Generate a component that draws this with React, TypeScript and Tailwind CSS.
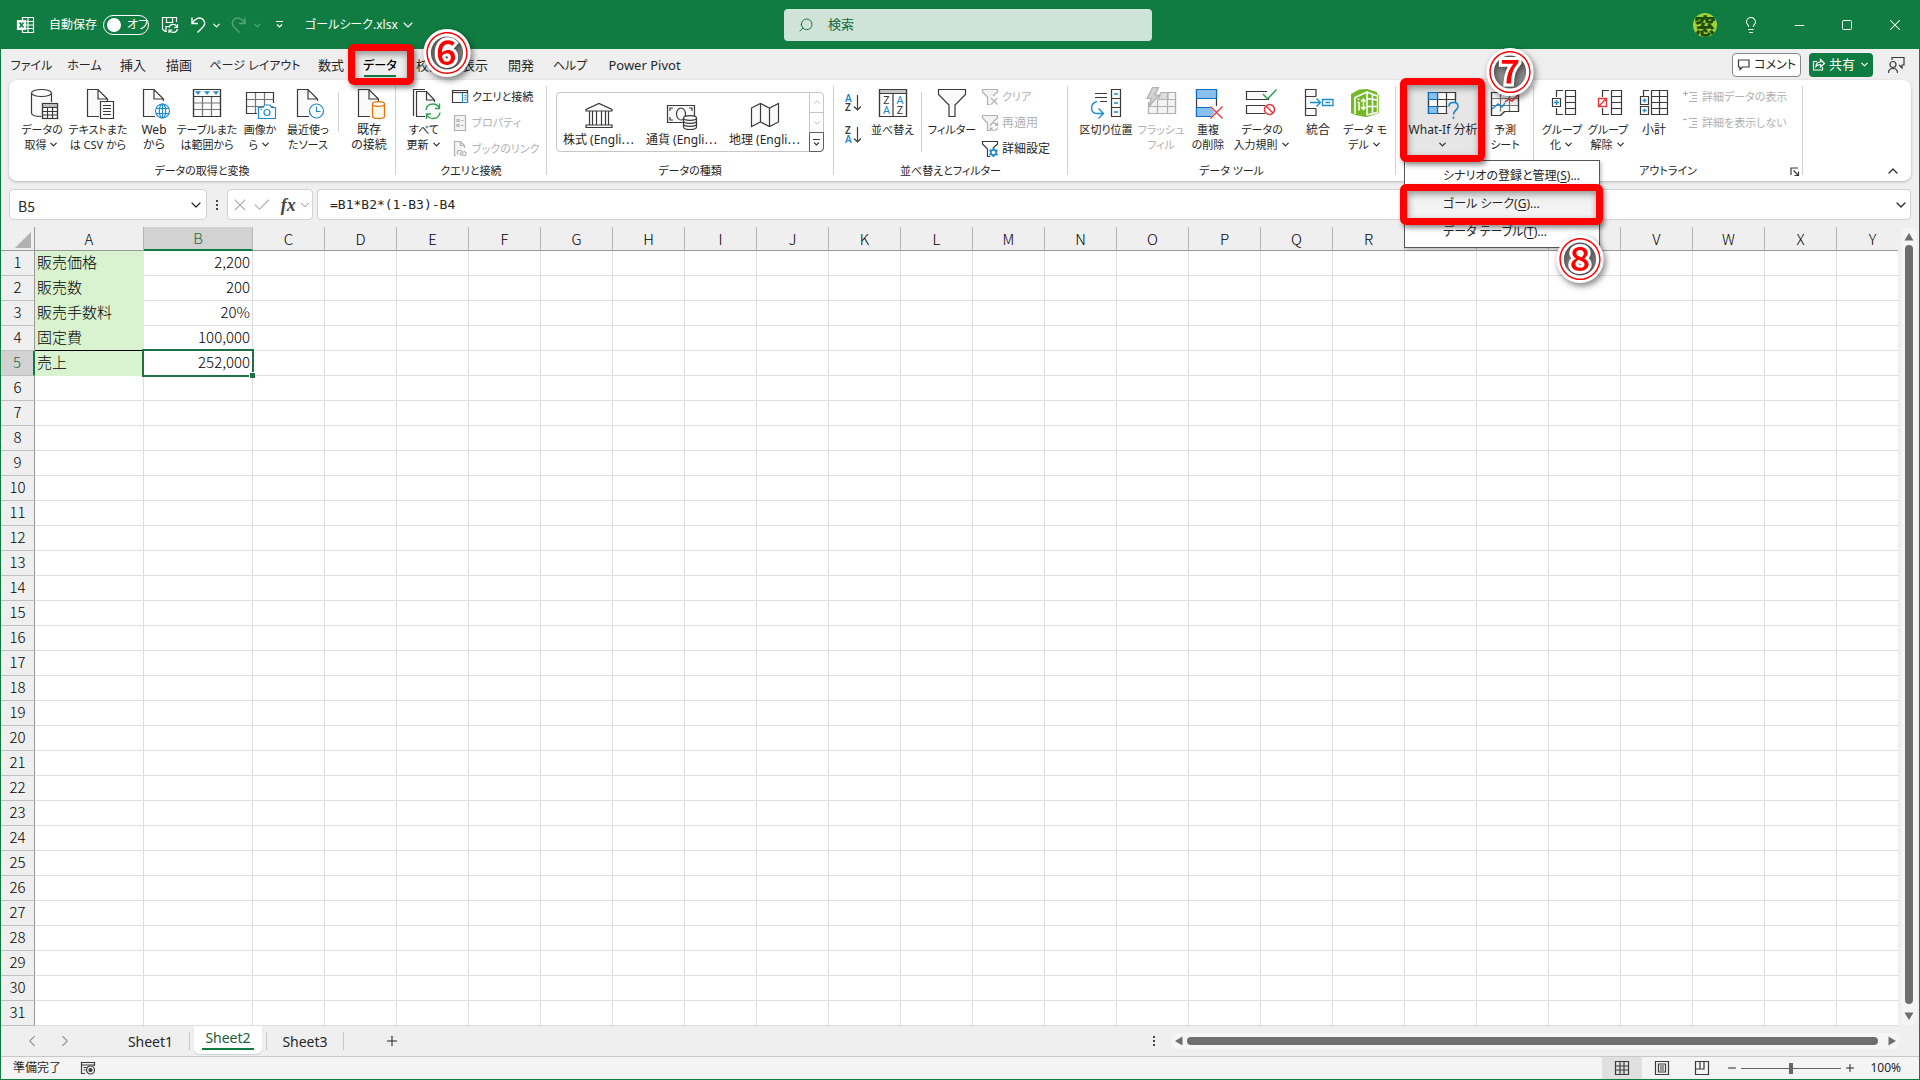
import type { ReactNode } from "react";
import { Check, ChevronDown, ChevronLeft, ChevronRight, ChevronUp, Lightbulb, Minus, Plus, Redo2, Search, Square, Undo2, X } from "lucide-react";

const INK = "#3b3a39";
const BLUE = "#1e8bcd";
const GREEN = "#2f9e4d";
const RED = "#e8383d";
const FADED = "#b1b1b1";

const tabs: { label: string; style: string }[] = [
  { label: "ファイル", style: "w-[55px] text-xs" },
  { label: "ホーム", style: "w-[51px] text-xs" },
  { label: "挿入", style: "w-[46px] text-[13px]" },
  { label: "描画", style: "w-[46px] text-[13px]" },
  { label: "ページ レイアウト", style: "w-[106px] text-xs" },
  { label: "数式", style: "w-[46px] text-[13px]" },
  { label: "データ", style: "w-[52px] text-xs" },
  { label: "校閲", style: "w-[46px] text-[13px]" },
  { label: "表示", style: "w-[46px] text-[13px]" },
  { label: "開発", style: "w-[46px] text-[13px]" },
  { label: "ヘルプ", style: "w-[52px] text-xs" },
  { label: "Power Pivot", style: "w-[97px] text-[13px]" },
];

const columns = "ABCDEFGHIJKLMNOPQRSTUVWXY".split("");

const sheet: { name: string; value: string }[] = [
  { name: "販売価格", value: "2,200" },
  { name: "販売数", value: "200" },
  { name: "販売手数料", value: "20%" },
  { name: "固定費", value: "100,000" },
  { name: "売上", value: "252,000" },
];

/* ---------- icons ---------- */

function Icon({ w = 32, h = 32, stroke = INK, children }: { w?: number; h?: number; stroke?: string; children: ReactNode }) {
  return (
    <svg width={w} height={h} viewBox={`0 0 ${w} ${h}`} fill="none" stroke={stroke} strokeWidth="1.2" className="shrink-0 overflow-visible" aria-hidden="true">
      {children}
    </svg>
  );
}

function Page() {
  return <path d="M25.5 13V11L16 1.5H5.5V28.5H17M16 1.5V11H25.5" fill="#fafafa" />;
}

const GetDataIcon = () => (
  <Icon>
    <path d="M5.500 5V25c0 2 4 3.500 10 3.500V15h10V5z" fill="#fafafa" stroke="none" />
    <path d="M5.500 5V25c0 2 4 3.500 10 3.500M25.500 5v9" />
    <ellipse cx="15.500" cy="5" rx="10" ry="3.500" fill="#fff" />
    <rect x="16.500" y="15.500" width="15" height="15" fill="#fff" />
    <path d="M17 17.500h14" stroke="#bbb" strokeWidth="3" />
    <path d="M16.500 19.500h15M16.500 23.500h15M16.500 27h15M21.500 19v11.500M26.500 19v11.500M16.500 15.500h15v15h-15z" />
  </Icon>
);
const TextCsvIcon = () => (
  <Icon>
    <Page />
    <path d="M18.500 13.500h13v17h-13z" fill="#fff" />
    <path d="M21 17.500h8M21 20.500h8M21 23.500h8M21 26.500h8" />
  </Icon>
);
const WebIcon = () => (
  <Icon>
    <Page />
    <g stroke={BLUE}>
      <circle cx="24.500" cy="23" r="7" fill="#fff" />
      <ellipse cx="24.500" cy="23" rx="3.200" ry="7" />
      <path d="M24.500 16v14M18 20.500h13M18 25.500h13" />
    </g>
  </Icon>
);
const TableIcon = () => (
  <Icon>
    <path d="M2.500 1.500h27v27h-27z" fill="#fafafa" />
    <path d="M2.500 8.500h27M2.500 15h27M2.500 21.500h27M11.500 8.500v20M20.500 8.500v20" stroke="#767676" />
    <path d="M2.500 1.500h27v27h-27zM2.500 8.500h27" />
    <path d="M4.500 3.500h5L7 6.500zM13.500 3.500h5L16 6.500zM22.500 3.500h5L25 6.500z" fill={BLUE} stroke={BLUE} strokeWidth=".5" />
  </Icon>
);
const PictureIcon = () => (
  <Icon>
    <path d="M2.500 4.500h27v21h-27z" fill="#fafafa" stroke="none" />
    <path d="M2.500 11.500h27M2.500 18.500h27M11.500 4.500v21M20.500 4.500v21" stroke="#767676" />
    <path d="M29.500 15V4.500h-27v21H13" />
    <path d="M14.500 19.500h4.500l1.500-2.500h5.500l1.500 2.500h4v11h-17z" fill="#fff" stroke={BLUE} />
    <circle cx="23" cy="24.500" r="3" stroke={BLUE} />
    <path d="M16.500 21.500h1.500" stroke={BLUE} />
  </Icon>
);
const RecentIcon = () => (
  <Icon>
    <Page />
    <circle cx="24.500" cy="23" r="7" fill="#fff" stroke={BLUE} />
    <path d="M24.500 18.500V23.500H28.500" stroke={BLUE} />
  </Icon>
);
const ExistingIcon = () => (
  <Icon>
    <Page />
    <g stroke="#e0730d">
      <path d="M19.500 16v12.500c0 1.200 2.500 2 6 2s6-.8 6-2V16" fill="#fff5e8" />
      <ellipse cx="25.500" cy="16" rx="6" ry="2.300" fill="#fff" />
    </g>
  </Icon>
);
const RefreshIcon = () => (
  <Icon>
    <path d="M5.500 28V1.500H17" />
    <path d="M26.500 14v-2L18.500 3.500H8.500v25H17M18.500 3.500v8.500h8" fill="#fafafa" />
    <circle cx="25" cy="23" r="8" fill="#fff" stroke="none" />
    <path
      d="M18 22c.5-4 3.500-6 7-6 3 0 5 1.500 6.500 4M31.500 15.500v5H27M32 24.500c-.5 4-3.500 6-7 6-3 0-5-1.500-6.500-4M18.500 31v-5H23"
      stroke={GREEN}
      strokeWidth="1.400"
    />
  </Icon>
);
const PaneIcon = () => (
  <Icon w={16} h={16}>
    <path d="M.5 1.500h15v12H.5z" fill="#fff" />
    <path d="M.5 3.500h15" />
    <path d="M10.500 4v9.500h5V4M12.500 6.500h1.500M12.500 8.500h1.500M12.500 10.500h1.500" stroke={BLUE} />
  </Icon>
);
const PropertiesIcon = () => (
  <Icon w={16} h={16} stroke={FADED}>
    <path d="M2.500.5h11v15h-11z" fill="#f3f3f3" />
    <path d="M5 4.500h2v2H5zM5 9.500h2v2H5zM9 5.500h2.500M9 10.500h2.500" />
  </Icon>
);
const BookLinkIcon = () => (
  <Icon w={16} h={16} stroke={FADED}>
    <path d="M4 14.500H2.500V.5h6l4 4V7M8.500.5v4h4" fill="#f3f3f3" />
    <path d="M6.500 13.500c-2.500-1.500-1-4.500 1.500-4l2 .5c1.500.5 1.500 3-.5 3M12 10.500c3 .5 2.500 4.500-.5 4l-2-.5c-1.500-.5-1.500-2.500 0-3" />
  </Icon>
);
const BankIcon = () => (
  <Icon w={30} h={26}>
    <path d="M2 9V7.500L15 1.500l13 6V9zM2 25.500v-2.500h26v2.500z" fill="#fafafa" />
    <path d="M5.500 9v14M8.500 9v14M12.500 9v14M17.500 9v14M21.500 9v14M24.500 9v14" />
  </Icon>
);
const MoneyIcon = () => (
  <Icon w={32} h={26}>
    <path d="M1.500 3.500h27v17h-27z" fill="#fafafa" />
    <path d="M4 9V6h3M26 9V6h-3M4 15v3h3" />
    <ellipse cx="15" cy="12" rx="4.500" ry="6" />
    <path d="M17.500 16v9c0 1.500 3 2.500 6.500 2.500s6.500-1 6.500-2.500v-9z" fill="#fff" />
    <ellipse cx="24" cy="16" rx="6.500" ry="2.300" fill="#fff" />
    <path d="M17.500 19c0 1.500 3 2.300 6.500 2.300s6.500-.8 6.500-2.300M17.500 22c0 1.500 3 2.300 6.500 2.300s6.500-.8 6.500-2.300" />
  </Icon>
);
const MapIcon = () => (
  <Icon w={30} h={26}>
    <path d="M1.500 6L10.500 1.500L19.500 6L28.500 1.500V20L19.500 24.500L10.500 20L1.500 24.500zM10.500 1.500V20M19.500 6V24.500" fill="#fafafa" />
  </Icon>
);

function SortLetters({ top, bottom, topBlue }: { top: string; bottom: string; topBlue: boolean }) {
  return (
    <Icon w={20} h={22}>
      <g stroke="none" fontFamily="Noto Sans, sans-serif" fontSize="10" fontWeight="600">
        <text x="1" y="10" fill={topBlue ? BLUE : INK}>{top}</text>
        <text x="1" y="19" fill={topBlue ? INK : BLUE}>{bottom}</text>
      </g>
      <path d="M13.500 3v15M10 14.500l3.500 3.500l3.500-3.500" />
    </Icon>
  );
}
const SortIcon = () => (
  <Icon>
    <path d="M2.500 1.500h27v27h-27z" fill="#fff" />
    <path d="M3 3.500h26" stroke="#c8c6c4" strokeWidth="3" />
    <path d="M2.500 5.500h27M16 5.500v23M2.500 1.500h27v27h-27z" />
    <g stroke="none" fontFamily="Noto Sans, sans-serif" fontSize="11" textAnchor="middle">
      <text x="9.500" y="16" fill={INK}>Z</text>
      <text x="9.500" y="26" fill={BLUE}>A</text>
      <text x="23" y="16" fill={BLUE}>A</text>
      <text x="23" y="26" fill={INK}>Z</text>
    </g>
  </Icon>
);
const FilterIcon = () => (
  <Icon>
    <path d="M2.500 1.500h27v5L19 17v11.500h-6V17L2.500 6.500z" fill="#fafafa" />
  </Icon>
);
function SmallFilter({ kind }: { kind: "clear" | "again" | "gear" }) {
  const c = kind === "gear" ? INK : FADED;
  return (
    <Icon w={16} h={16} stroke={c}>
      <path d="M8 15.500H5.500V8L.5 3V.5h15V3L11 7" fill={kind === "gear" ? "#fff" : "#f3f3f3"} />
      {kind === "clear" && <path d="M9 9l6.500 6.500M15.500 9L9 15.500" />}
      {kind === "again" && <path d="M8.500 11c.5-4 5.500-4 6.500-.5M15.500 7.500v3H13M15.500 12.500c-.5 3.500-5 4-6.500 1M8.500 16v-3H11" />}
      {kind === "gear" && (
        <g stroke={BLUE}>
          <circle cx="11.500" cy="11.500" r="2.600" fill="#fff" strokeWidth="1.600" />
          <path d="M11.500 7v2M11.500 14v2M7.500 9.200l1.800 1M13.700 12.800l1.800 1M7.500 13.800l1.800-1M13.700 10.200l1.800-1" strokeWidth="2" />
        </g>
      )}
    </Icon>
  );
}
const SplitIcon = () => (
  <Icon>
    <path d="M21.500 1.500h9v27h-9zM21.500 10.500h9M21.500 19.500h9" fill="#fafafa" />
    <path d="M5 5.500h12M5 9.500h12M10 13.500h7" />
    <path d="M24 6h4M24 15h4M24 24h4M7 13.500C0 15 0 24.500 6 25.500h7M8.500 20.500l5 5l-5 5" stroke={BLUE} strokeWidth="1.400" />
  </Icon>
);
const FlashIcon = () => (
  <Icon stroke={FADED}>
    <path d="M3.500 14v11.500h27V4.500H16" fill="#f3f3f3" />
    <path d="M16 4.500h7v7h-10z" fill="#ddd" />
    <path d="M14 11.500h16.500M3.500 18.500h27M12.500 12v13.500M22.500 4.500v21M30.500 4.500v21" />
    <path d="M7.500-.5h6L10 7h4L3.500 19L6.500 10.500H2z" fill="#d2d2d2" />
  </Icon>
);
const DuplicatesIcon = () => (
  <Icon>
    <path d="M4.500 1.500h20v27h-20z" fill="#fafafa" />
    <path d="M4.500 1.500h20v9h-20zM4.500 19.500h20v9h-20z" fill="#8ac0ec" stroke="#0f6cbd" />
    <path d="M17.500 18h12v13h-12l5-6.500z" fill="#fff" stroke="none" />
    <path d="M18.500 18.500l12 12M30.500 18.500l-12 12" stroke={RED} strokeWidth="1.400" />
  </Icon>
);
const ValidationIcon = () => (
  <Icon>
    <path d="M21 3.500H.5v8h22V9M19 17.500H.5v8H19" fill="#fafafa" />
    <path d="M17 6l4.500 5L30.500 1.500" stroke={GREEN} strokeWidth="1.400" />
    <circle cx="23.500" cy="21.500" r="5" fill="#fff" stroke={RED} strokeWidth="1.500" />
    <path d="M20 18l7 7" stroke={RED} strokeWidth="1.500" />
  </Icon>
);
const ConsolidateIcon = () => (
  <Icon>
    <path d="M14 8.500V1.500H3.500v26H14v-7M3.500 8.500H14M3.500 20.500H14M3.500 8.500v12" fill="#fafafa" />
    <path d="M8 14.500h10M14.500 10.500l4 4l-4 4M20.500 11.500h10.500v6H20.500zM23.500 14.500h4.500" stroke={BLUE} strokeWidth="1.300" />
  </Icon>
);
const ModelIcon = () => (
  <Icon>
    <path d="M2 6L10 1.500 18 1l10 3v3L17 29 6 27 2 25z" fill="#76b82a" stroke="none" />
    <path d="M13 4L18 2.500L30 7v18L18 29l-5-1z" fill="#76b82a" stroke="none" />
    <g stroke="#fff" strokeWidth="1.500">
      <path d="M6 26V9.500L18 4v23M17.500 4l11 4v16.500l-11 2.500M18 10.500l10.500 1.500M18 18.500h10.500M23.500 6v19" />
      <path d="M9.500 10.500v1.500M8.500 14.500h1.500v8M14.500 11v10.500M12 13.500l2.500-2.500l2 2.500M12 19l2.500 2.500l2-2.500" />
    </g>
  </Icon>
);
const WhatIfIcon = () => (
  <Icon>
    <path d="M1.500 4.500h27v21h-27z" fill="#fafafa" />
    <path d="M1.500 11.500h27M1.500 18.500h27M10.500 4.500v21M19.500 4.500v21M20 25.500H1.500v-21h27V11" />
    <path d="M1.500 4.500h9v7h-9zM1.500 18.500h9v7h-9z" fill="#8ac0ec" stroke="#0f6cbd" />
    <path d="M20.500 14h12v18h-12z" fill="#e6e6e6" stroke="none" />
    <path d="M22 18.500c0-5.500 9-5.500 9 0 0 3.500-4.500 4-4.500 8M26.500 28.500v2.500" stroke={BLUE} strokeWidth="1.600" />
  </Icon>
);
const ForecastIcon = () => (
  <Icon>
    <path d="M2.500 4.500h27v19h-14l-4 4h-9z" fill="#fafafa" />
    <path d="M2.500 10.500h27M2.500 17.500h27M11.500 4.500v19M20.500 4.500v19" stroke="#767676" />
    <path d="M2.500 4.500h27v19h-14l-4 4h-9z" />
    <path d="M3 21l6-5l4 3l3-4" stroke={BLUE} strokeWidth="1.500" />
    <path d="M16 14l4-3l3 2l7-7" stroke={RED} strokeWidth="1.500" />
  </Icon>
);
const GroupIcon = () => (
  <Icon>
    <path d="M19.500 2.500h10v24h-10zM19.500 8.500h10M19.500 14.500h10M19.500 20.500h10M17 2.500h-6.500V9M17 26.500h-6.500V20" fill="#fafafa" />
    <path d="M6.500 10.500h8v8h-8z" fill="#fff" />
    <path d="M8 14.500h5M10.500 12v5" stroke={BLUE} strokeWidth="1.500" />
  </Icon>
);
const UngroupIcon = () => (
  <Icon>
    <path d="M19.500 2.500h10v24h-10zM19.500 8.500h10M19.500 14.500h10M19.500 20.500h10M17 2.500h-6.500V9M17 26.500h-6.500V20" fill="#fafafa" />
    <path d="M6.500 10.500h8v8h-8zM7 18l7-7" fill="#fff" stroke={RED} strokeWidth="1.400" />
  </Icon>
);
const SubtotalIcon = () => (
  <Icon>
    <path d="M13.500 2.500h16v24h-16zM13.500 8.500h16M13.500 14.500h16M13.500 20.500h16M21.500 2.500v24M11 2.500H5.500V8" fill="#fafafa" />
    <path d="M2.500 8.500h8v8h-8zM2.500 18.500h8v8h-8z" fill="#fff" />
    <path d="M4.500 12.500h4M6.500 10.500v4M4.500 22.500h4M6.500 20.500v4" stroke={BLUE} strokeWidth="1.300" />
  </Icon>
);
function DetailIcon({ plus }: { plus: boolean }) {
  return (
    <Icon w={16} h={16} stroke={FADED}>
      <path d={plus ? "M1 4.500h5M3.500 2v5" : "M1 4.500h4"} />
      <path d="M7 3.500h8M10 6.500h5M10 9.500h5M7 12.500h8" />
    </Icon>
  );
}
const ExcelIcon = () => (
  <Icon w={18} h={18} stroke="#fff">
    <path d="M5.500 4V1.500h11v15h-11V14M5 5.500h11.500M9 9h7.500M5 12.500h11.500M11 1.500v15" />
    <path d="M.5 4.500h8v9h-8z" fill="#fff" />
    <path d="M2.500 6.500l4 5M6.500 6.500l-4 5" stroke="#107c41" strokeWidth="1.500" />
  </Icon>
);
const SaveIcon = () => (
  <Icon w={18} h={18} stroke="#fff">
    <path d="M6 15.500H4L1.500 13V1.500h14V6M5.500 2v4.500h6V2M5 15v-4.500h3" />
    <path d="M8 11.500c1-4 6.500-4 8-.5M16.500 8v3.500H13M16.500 13c-1 4-6 4.500-8 1.500M8 17v-3h3.500" />
  </Icon>
);

/* ---------- ribbon pieces ---------- */

const Caret = () => <ChevronDown size={11} strokeWidth={2.5} className="inline-block shrink-0" aria-hidden="true" />;

type RibbonButtonProps = {
  icon: ReactNode;
  lines: string[];
  width: string;
  caret?: boolean;
  disabled?: boolean;
  tight?: boolean;
  className?: string;
};

function RibbonButton({ icon, lines, width, caret, disabled, tight, className = "" }: RibbonButtonProps) {
  return (
    <button
      type="button"
      disabled={disabled}
      className={`flex shrink-0 flex-col items-center gap-0.5 whitespace-nowrap ${tight ? "text-[11px]" : "text-xs"} leading-[15px] ${width} ${disabled ? "text-[#b1b1b1]" : ""} ${className}`}
    >
      {icon}
      <span className="flex flex-col items-center">
        {lines.map((line, i) => (
          <span key={i} className="flex h-[15px] items-center gap-0.5">
            {line}
            {caret && i === lines.length - 1 && <Caret />}
          </span>
        ))}
      </span>
    </button>
  );
}

function SmallButton({ icon, label, disabled, tight }: { icon: ReactNode; label: string; disabled?: boolean; tight?: boolean }) {
  return (
    <button type="button" disabled={disabled} className={`flex h-[26px] items-center gap-1 whitespace-nowrap ${tight ? "text-[11px]" : "text-xs"} ${disabled ? "text-[#b1b1b1]" : ""}`}>
      {icon}
      {label}
    </button>
  );
}

function Group({ label, width, children, className = "" }: { label?: string; width: string; children: ReactNode; className?: string }) {
  return (
    <>
      <section className={`flex shrink-0 flex-col pt-2 ${width}`}>
        <div className={`flex h-[75px] ${className}`}>{children}</div>
        {label && <h2 className="text-center text-[11px] leading-4">{label}</h2>}
      </section>
      <div className="my-1.5 w-px shrink-0 bg-[#d1d1d1]" />
    </>
  );
}

// red frame drawn around the control that a step refers to
function Frame({ className }: { className: string }) {
  return <span className={`pointer-events-none absolute z-30 rounded-md border-[7px] border-[#fe0000] shadow-[2px_3px_5px_rgba(0,0,0,0.45),inset_1px_3px_7px_rgba(0,0,0,0.4)] ${className}`} />;
}

function Step({ mark, className }: { mark: string; className: string }) {
  return (
    <span className={`pointer-events-none absolute z-40 flex size-12 items-center justify-center ${className}`}>
      <span className="absolute inset-1 rounded-full bg-[#909090]" />
      <span className="relative text-[44px] leading-none font-medium text-[#fe0000] drop-shadow-[2px_3px_3px_rgba(0,0,0,0.5)] [-webkit-text-stroke:6px_white] [paint-order:stroke_fill] font-['Noto_Sans_CJK_JP',sans-serif]">
        {mark}
      </span>
    </span>
  );
}

function TitleBar() {
  return (
    <header className="flex h-12 shrink-0 items-center bg-[#107c41] text-white">
      <div className="flex flex-1 items-center pl-4">
        <ExcelIcon />
        <label htmlFor="autosave" className="ml-3.5 text-xs">自動保存</label>
        <span className="relative ml-1.5 flex h-5 w-[46px] items-center">
          <input id="autosave" type="checkbox" role="switch" className="absolute inset-0 appearance-none rounded-full border border-white" />
          <span className="pointer-events-none ml-1 size-3.5 rounded-full bg-white" />
          <span className="pointer-events-none ml-1.5 text-xs">オフ</span>
        </span>
        <button type="button" aria-label="保存" className="ml-3"><SaveIcon /></button>
        <button type="button" aria-label="元に戻す" className="ml-2.5 flex items-center gap-1">
          <Icon w={18} h={18} stroke="#fff"><path d="M3 1.500V7.500H9M3 7.500C6 2 11 .5 14 3.500s2 6-1 8.500L8.500 16.500" strokeWidth="1.400" /></Icon>
          <Caret />
        </button>
        <button type="button" aria-label="やり直し" className="ml-2 flex items-center gap-1 text-[#58a67b]">
          <Icon w={18} h={18} stroke="#58a67b"><path d="M15 1.500V7.500H9M15 7.500C12 2 7 .5 4 3.500s-2 6 1 8.500L9.500 16.500" strokeWidth="1.400" /></Icon>
          <Caret />
        </button>
        <button type="button" aria-label="カスタマイズ" className="ml-3">
          <Icon w={10} h={10} stroke="#fff"><path d="M1 1.500h7M2 4.500l2.500 2.500L7 4.500" /></Icon>
        </button>
        <button type="button" className="ml-5 flex items-center gap-0.5 text-xs">
          ゴールシーク.xlsx
          <ChevronDown size={16} strokeWidth={1.6} />
        </button>
      </div>
      <label className="flex h-8 w-[368px] items-center gap-3.5 rounded-sm bg-[#cfe3d8] pl-3.5 text-[#0f6b38]">
        <Search size={16} strokeWidth={1.4} className="-scale-x-100" />
        <input type="search" placeholder="検索" aria-label="検索" className="min-w-0 flex-1 bg-transparent text-[13px] outline-none placeholder:text-[#0f6b38]" />
      </label>
      <div className="flex flex-1 items-center justify-end">
        <button type="button" aria-label="アカウント" className="flex w-11 justify-center">
          <span className="flex size-6 items-center justify-center overflow-hidden rounded-full bg-[#a4d233] text-[22px] leading-none font-black text-[#1e4d12]">窓</span>
        </button>
        <button type="button" aria-label="ヒント" className="flex w-12 justify-center"><Lightbulb size={18} strokeWidth={1.4} /></button>
        <button type="button" aria-label="最小化" className="flex w-12 justify-center"><Minus size={15} strokeWidth={1.6} /></button>
        <button type="button" aria-label="最大化" className="flex w-12 justify-center"><Square size={12} strokeWidth={2} /></button>
        <button type="button" aria-label="閉じる" className="flex w-12 justify-center"><X size={18} strokeWidth={1.4} /></button>
      </div>
    </header>
  );
}

function TabBar() {
  return (
    <nav className="flex h-[31px] shrink-0 items-center pr-3.5 pl-[3px]">
      {tabs.map((t) => {
        const active = t.label === "データ";
        return (
          <button key={t.label} type="button" className={`relative flex h-full shrink-0 items-center justify-center pt-0.5 whitespace-nowrap ${t.style}`}>
            <span className={active ? "font-medium text-black" : ""}>{t.label}</span>
            {active && (
              <>
                <span className="absolute inset-x-2.5 bottom-[3px] h-0.5 bg-[#107c41]" />
                <Frame className="-top-[5px] -right-2 -bottom-[5px] -left-1.5" />
                <Step mark="⑥" className="-top-[22px] left-[69px]" />
              </>
            )}
          </button>
        );
      })}
      <div className="ml-auto flex items-center">
        <button type="button" className="flex h-6 items-center gap-1 rounded border border-[#8a8886] bg-white px-1 text-xs">
          <Icon w={13} h={13}><path d="M1.500 2h10.500v7H5.500L3 11.500V9H1.500z" /></Icon>
          コメント
        </button>
        <button type="button" className="ml-2 flex h-6 w-16 items-center justify-center gap-1 rounded bg-[#107c41] text-[13px] text-white">
          <Icon w={13} h={13} stroke="#fff"><path d="M5 3.500H1.500v8.500h9V9M4 8.500C4 5 6 4 8.500 4V1.500L12.500 5.500L8.500 9V6.500C6.500 6.500 5 7 4 8.500z" /></Icon>
          共有
          <Caret />
        </button>
        <button type="button" aria-label="共同編集" className="ml-3.5">
          <Icon w={18} h={18}>
            <path d="M5 4V1.500h12V9h-2v3l-3-3M1.500 17c0-6 9-6 9 0" />
            <circle cx="6" cy="8.500" r="3" />
          </Icon>
        </button>
      </div>
    </nav>
  );
}

const gallery = [
  { label: "株式 (Engli⋯", icon: <BankIcon /> },
  { label: "通貨 (Engli⋯", icon: <MoneyIcon /> },
  { label: "地理 (Engli⋯", icon: <MapIcon /> },
];

function Ribbon() {
  return (
    <div className="mx-2 flex h-[101px] shrink-0 rounded-lg bg-white shadow-[0_1px_3px_rgba(0,0,0,0.25)]">
      <Group label="データの取得と変換" width="w-[386px]" className="pl-[7px]">
        <RibbonButton width="w-[52px]" icon={<GetDataIcon />} lines={["データの", "取得"]} caret tight />
        <RibbonButton width="w-[60px]" icon={<TextCsvIcon />} lines={["テキストまた", "は CSV から"]} tight />
        <RibbonButton width="w-[52px]" icon={<WebIcon />} lines={["Web", "から"]} />
        <RibbonButton width="w-[54px]" icon={<TableIcon />} lines={["テーブルまた", "は範囲から"]} tight />
        <RibbonButton width="w-[52px]" icon={<PictureIcon />} lines={["画像か", "ら"]} caret tight />
        <RibbonButton width="w-[44px]" icon={<RecentIcon />} lines={["最近使っ", "たソース"]} tight />
        <div className="mx-2 mt-1 h-10 w-px shrink-0 bg-[#d1d1d1]" />
        <RibbonButton width="w-[44px]" icon={<ExistingIcon />} lines={["既存", "の接続"]} />
      </Group>
      <Group label="クエリと接続" width="w-[150px]" className="gap-1 pl-1">
        <RibbonButton width="w-[48px]" icon={<RefreshIcon />} lines={["すべて", "更新"]} caret tight />
        <div className="-mt-1">
          <SmallButton icon={<PaneIcon />} label="クエリと接続" tight />
          <SmallButton icon={<PropertiesIcon />} label="プロパティ" disabled tight />
          <SmallButton icon={<BookLinkIcon />} label="ブックのリンク" disabled tight />
        </div>
      </Group>
      <Group label="データの種類" width="w-[286px]" className="px-[9px] pt-1">
        <div className="flex h-[60px] flex-1 rounded border border-[#c8c6c4]">
          {gallery.map((g) => (
            <button key={g.label} type="button" className="flex w-[83px] flex-col items-center gap-1 pt-[9px] text-xs leading-4 whitespace-nowrap">
              {g.icon}
              {g.label}
            </button>
          ))}
          <div className="-my-px -mr-px ml-auto flex w-[15px] flex-col">
            <button type="button" aria-label="上へ" className="flex h-5 items-center justify-center border-l border-[#c8c6c4] text-[#b1b1b1]"><ChevronUp size={10} strokeWidth={2} /></button>
            <button type="button" aria-label="下へ" className="flex h-5 items-center justify-center border-t border-l border-[#c8c6c4] text-[#b1b1b1]"><ChevronDown size={10} strokeWidth={2} /></button>
            <button type="button" aria-label="その他" className="flex h-5 items-center justify-center rounded-br border border-[#605e5c]">
              <Icon w={9} h={9}><path d="M1 1.500h7M2 4.500l2.500 2.500L7 4.500" /></Icon>
            </button>
          </div>
        </div>
      </Group>
      <Group label="並べ替えとフィルター" width="w-[233px]" className="pl-2.5">
        <div className="flex w-5 flex-col gap-2.5 pt-1">
          <button type="button" aria-label="昇順"><SortLetters top="A" bottom="Z" topBlue /></button>
          <button type="button" aria-label="降順"><SortLetters top="Z" bottom="A" topBlue={false} /></button>
        </div>
        <RibbonButton width="w-[57px]" icon={<SortIcon />} lines={["並べ替え"]} tight />
        <div className="mt-1 h-[60px] w-px shrink-0 bg-[#d1d1d1]" />
        <RibbonButton width="w-[60px]" icon={<FilterIcon />} lines={["フィルター"]} tight />
        <div className="-mt-1">
          <SmallButton icon={<SmallFilter kind="clear" />} label="クリア" disabled tight />
          <SmallButton icon={<SmallFilter kind="again" />} label="再適用" disabled />
          <SmallButton icon={<SmallFilter kind="gear" />} label="詳細設定" />
        </div>
      </Group>
      <Group label="データ ツール" width="w-[327px]" className="pl-2.5">
        <RibbonButton width="w-[56px]" icon={<SplitIcon />} lines={["区切り位置"]} tight />
        <RibbonButton width="w-[54px]" icon={<FlashIcon />} lines={["フラッシュ", "フィル"]} disabled tight />
        <RibbonButton width="w-[40px]" icon={<DuplicatesIcon />} lines={["重複", "の削除"]} tight />
        <RibbonButton width="w-[68px]" icon={<ValidationIcon />} lines={["データの", "入力規則"]} caret tight />
        <RibbonButton width="w-[44px]" icon={<ConsolidateIcon />} lines={["統合"]} />
        <RibbonButton width="w-[50px]" icon={<ModelIcon />} lines={["データ モ", "デル"]} caret tight />
      </Group>
      <Group width="w-[137px]" className="gap-0.5 pl-2.5">
        <div className="relative z-20">
          <RibbonButton width="w-[74px]" icon={<WhatIfIcon />} lines={["What-If 分析", ""]} caret className="-mt-1 h-[74px] bg-[#e6e6e6] pt-1" />
          <ul role="menu" className="absolute top-[72px] -left-0.5 w-[196px] border border-[#555] bg-white py-px text-xs shadow-[2px_2px_3px_rgba(0,0,0,0.2)]">
            <MenuItem label="シナリオの登録と管理" accel="S" />
            <MenuItem label="ゴール シーク" accel="G" active />
            <MenuItem label="データ テーブル" accel="T" />
          </ul>
          <Frame className="-top-2.5 -right-[5px] -left-1.5 h-[84px]" />
          <Step mark="⑦" className="-top-[42px] left-20" />
        </div>
        <RibbonButton width="w-[46px]" icon={<ForecastIcon />} lines={["予測", "シート"]} tight />
      </Group>
      <Group label="アウトライン" width="w-[268px]" className="relative gap-0.5 pl-1.5">
        <RibbonButton width="w-[44px]" icon={<GroupIcon />} lines={["グループ", "化"]} caret tight />
        <RibbonButton width="w-[44px]" icon={<UngroupIcon />} lines={["グループ", "解除"]} caret tight />
        <RibbonButton width="w-[44px]" icon={<SubtotalIcon />} lines={["小計"]} />
        <div className="-mt-1 ml-1">
          <SmallButton icon={<DetailIcon plus />} label="詳細データの表示" disabled tight />
          <SmallButton icon={<DetailIcon plus={false} />} label="詳細を表示しない" disabled tight />
        </div>
        <button type="button" aria-label="アウトラインの設定" className="absolute right-0.5 -bottom-3.5">
          <Icon w={10} h={10}><path d="M1 8V1h7M3.500 3.500l5 5M8.500 4.500v4h-4" /></Icon>
        </button>
      </Group>
      <button type="button" aria-label="リボンを折りたたむ" className="mt-auto mr-2.5 mb-0.5 ml-auto"><ChevronUp size={16} strokeWidth={1.8} /></button>
    </div>
  );
}

function MenuItem({ label, accel, active }: { label: string; accel: string; active?: boolean }) {
  return (
    <li className="relative">
      <button type="button" role="menuitem" className={`flex h-7 w-full items-center pl-[38px] text-left whitespace-nowrap ${active ? "bg-[#f3f3f3]" : ""}`}>
        {label}(<u className="underline-offset-2">{accel}</u>)...
      </button>
      {active && (
        <>
          <Frame className="-top-1.5 -right-1 -bottom-[7px] -left-[5px]" />
          <Step mark="⑧" className="top-[43px] left-[151px]" />
        </>
      )}
    </li>
  );
}

function FormulaBar() {
  return (
    <div className="mx-2 mt-2 flex h-[31px] shrink-0 items-stretch">
      <div className="flex w-[198px] items-center rounded border border-[#d1d1d1] bg-white pr-0.5 pl-2">
        <input aria-label="名前ボックス" defaultValue="B5" className="min-w-0 flex-1 bg-transparent pt-0.5 text-sm outline-none font-['Noto_Sans_CJK_JP',sans-serif]" />
        <button type="button" aria-label="名前の一覧"><ChevronDown size={16} strokeWidth={1.8} /></button>
      </div>
      <div className="flex w-5 flex-col items-center justify-center gap-0.5">
        <span className="size-0.5 bg-[#444]" />
        <span className="size-0.5 bg-[#444]" />
        <span className="size-0.5 bg-[#444]" />
      </div>
      <div className="flex w-[86px] items-center justify-between rounded border border-[#d1d1d1] bg-white">
        <button type="button" aria-label="キャンセル" className="pl-0.5 text-[#b1b1b1]"><X size={20} strokeWidth={1.3} /></button>
        <button type="button" aria-label="入力" className="text-[#b1b1b1]"><Check size={20} strokeWidth={1.3} /></button>
        <button type="button" aria-label="関数の挿入" className="pl-1.5 text-lg leading-none font-bold text-[#444] italic font-['Liberation_Serif',serif]">fx</button>
        <ChevronDown size={14} strokeWidth={1.6} className="text-[#888]" />
      </div>
      <input aria-label="数式バー" defaultValue="=B1*B2*(1-B3)-B4" className="ml-1 min-w-0 flex-1 rounded-l border border-r-0 border-[#d1d1d1] bg-white pl-3 text-[13px] outline-none font-['DejaVu_Sans_Mono',monospace]" />
      <button type="button" aria-label="数式バーの展開" className="flex w-[18px] items-center rounded-r border border-l-0 border-[#d1d1d1] bg-white"><ChevronDown size={16} strokeWidth={1.8} /></button>
    </div>
  );
}

function Grid() {
  return (
    <div className="mt-[7px] flex min-h-0 flex-1">
      <div className="min-w-0 flex-1 overflow-hidden">
        <table className="w-full table-fixed border-separate border-spacing-0 text-[15px] leading-5 text-black font-['Noto_Sans_CJK_JP',sans-serif]">
          <colgroup>
            <col className="w-[34px]" />
            {columns.map((c, i) => (
              <col key={c} className={i < 2 ? "w-[109px]" : "w-[72px]"} />
            ))}
          </colgroup>
          <thead>
            <tr className="h-6">
              <th aria-label="すべて選択" className="border-r border-b border-[#999] p-0">
                <svg width="16" height="16" viewBox="0 0 16 16" className="mt-0.5 ml-3.5" aria-hidden="true"><path d="M16 0V16H0z" fill="#b1b1b1" /></svg>
              </th>
              {columns.map((c) => (
                <th key={c} className={`p-0 font-light ${c === "B" ? "border-r border-b-2 border-r-[#bbb] border-b-[#107c41] bg-[#d2d2d2] text-[#1d6b41]" : "border-r border-b border-r-[#b5b5b5] border-b-[#999]"}`}>
                  {c}
                </th>
              ))}
            </tr>
          </thead>
          <tbody>
            {Array.from({ length: 31 }, (_, r) => {
              const row = sheet[r];
              const selected = r === 4;
              return (
                <tr key={r} className="h-[25px]">
                  <th className={`border-b border-b-[#c0c0c0] px-0 pt-0 pb-0.5 font-light ${selected ? "border-r-2 border-r-[#107c41] bg-[#d2d2d2] text-[#1d6b41]" : "border-r border-r-[#999]"}`}>{r + 1}</th>
                  {columns.map((c) => {
                    if (row && c === "A")
                      return (
                        <td key={c} className={`border-r border-b border-r-[#d9f2d0] bg-[#d9f2d0] pt-0 pr-0 pb-0.5 pl-0.5 font-light ${r === 3 ? "border-b-black" : "border-b-[#d9f2d0]"}`}>
                          {row.name}
                        </td>
                      );
                    if (row && c === "B")
                      return (
                        <td key={c} className="relative border-r border-b border-[#dedede] bg-white pt-0 pr-0.5 pb-0.5 pl-0 text-right font-light">
                          {row.value}
                          {selected && (
                            <>
                              <span className="absolute -inset-0.5 border-2 border-[#1f7145]" />
                              <span className="absolute -right-[3px] -bottom-[3px] size-1.5 border-t border-l border-white bg-[#1f7145]" />
                            </>
                          )}
                        </td>
                      );
                    return <td key={c} className="border-r border-b border-[#dedede] bg-white p-0" />;
                  })}
                </tr>
              );
            })}
          </tbody>
        </table>
      </div>
      <div className="flex w-[21px] shrink-0 justify-center">
        <div className="flex w-4 flex-col items-center gap-1 rounded-full bg-[#f5f5f5] py-1.5">
          <svg width="10" height="8" viewBox="0 0 10 8" aria-hidden="true"><path d="M5 0L9.500 7.500H.5z" fill="#6e6e6e" /></svg>
          <div className="w-2 flex-1 rounded-full bg-[#6e6e6e]" />
          <svg width="10" height="8" viewBox="0 0 10 8" className="mt-1" aria-hidden="true"><path d="M5 8L9.500 .5H.5z" fill="#6e6e6e" /></svg>
        </div>
      </div>
    </div>
  );
}

function SheetBar() {
  return (
    <div className="flex h-[31px] shrink-0 items-center border-b border-[#c8c8c8] text-sm">
      <button type="button" aria-label="前のシート" className="ml-[22px] text-[#999]"><ChevronLeft size={18} strokeWidth={1.6} /></button>
      <button type="button" aria-label="次のシート" className="ml-[15px] text-[#999]"><ChevronRight size={18} strokeWidth={1.6} /></button>
      <button type="button" className="ml-[38px] w-[77px] pt-0.5">Sheet1</button>
      <div className="h-[18px] w-px bg-[#c8c8c8]" />
      <button type="button" className="mx-1 flex h-7 w-[68px] items-end justify-center self-start rounded-b-md bg-white pb-1 shadow-[0_1px_1px_rgba(0,0,0,0.12)]">
        <span className="border-b-2 border-[#107c41] px-[3px] text-[#1b5e38]">Sheet2</span>
      </button>
      <div className="h-[18px] w-px bg-[#c8c8c8]" />
      <button type="button" className="w-[76px] pt-0.5">Sheet3</button>
      <div className="h-[18px] w-px bg-[#c8c8c8]" />
      <button type="button" aria-label="新しいシート" className="ml-10"><Plus size={16} strokeWidth={1.6} /></button>
      <div className="mr-4 ml-auto flex flex-col gap-0.5">
        <span className="size-0.5 bg-[#444]" />
        <span className="size-0.5 bg-[#444]" />
        <span className="size-0.5 bg-[#444]" />
      </div>
      <div className="mr-[19px] flex h-4 w-[38%] items-center gap-1 rounded-full bg-[#f5f5f5] px-1">
        <svg width="8" height="10" viewBox="0 0 8 10" aria-hidden="true"><path d="M0 5L7.500 .5V9.500z" fill="#6e6e6e" /></svg>
        <div className="mr-1.5 h-2 flex-1 rounded-full bg-[#6e6e6e]" />
        <svg width="8" height="10" viewBox="0 0 8 10" aria-hidden="true"><path d="M8 5L.5 .5V9.500z" fill="#6e6e6e" /></svg>
      </div>
    </div>
  );
}

function StatusBar() {
  return (
    <footer className="flex h-[22px] shrink-0 items-center bg-[#f4f4f4] pr-[18px] pl-3 text-xs">
      <span>準備完了</span>
      <button type="button" aria-label="マクロの記録" className="ml-5">
        <Icon w={15} h={14}>
          <path d="M4 12.500H.5V1.500h13V5M.5 4h13M2.500 6.500h3M2.500 9h2" />
          <circle cx="9.500" cy="9" r="4" />
          <circle cx="9.500" cy="9" r="1.500" fill={INK} />
        </Icon>
      </button>
      <button type="button" aria-label="標準" className="ml-auto flex h-full w-10 items-center justify-center bg-[#e0e0e0]">
        <Icon w={14} h={14}><path d="M.5.5h13v13H.5zM.5 5h13M.5 9h13M5 .5v13M9 .5v13" /></Icon>
      </button>
      <button type="button" aria-label="ページ レイアウト" className="flex h-full w-10 items-center justify-center">
        <Icon w={14} h={14}><path d="M.5.5h13v13H.5zM3.500 3h7v8h-7zM5 5h4M5 7h4M5 9h4" /></Icon>
      </button>
      <button type="button" aria-label="改ページ プレビュー" className="flex h-full w-10 items-center justify-center">
        <Icon w={14} h={14}><path d="M.5.5h13v13H.5zM.5 8h8.500V.5M5 .5V8" /></Icon>
      </button>
      <button type="button" aria-label="縮小" className="ml-1"><Minus size={12} /></button>
      <input
        type="range"
        aria-label="ズーム"
        className="mx-[3px] h-4 w-[100px] appearance-none bg-transparent [&::-webkit-slider-runnable-track]:h-px [&::-webkit-slider-runnable-track]:bg-[#666] [&::-webkit-slider-thumb]:-mt-[5px] [&::-webkit-slider-thumb]:h-[11px] [&::-webkit-slider-thumb]:w-1 [&::-webkit-slider-thumb]:appearance-none [&::-webkit-slider-thumb]:bg-[#666]"
      />
      <button type="button" aria-label="拡大"><Plus size={12} /></button>
      <span className="ml-3.5">100%</span>
    </footer>
  );
}

export default function App() {
  return (
    <div className="flex h-screen flex-col overflow-hidden border border-[#107c41] bg-[#efefef] text-[#262626] [font-feature-settings:'palt'] font-['Noto_Sans','Noto_Sans_CJK_JP',sans-serif]">
      <TitleBar />
      <TabBar />
      <Ribbon />
      <FormulaBar />
      <Grid />
      <SheetBar />
      <StatusBar />
    </div>
  );
}
